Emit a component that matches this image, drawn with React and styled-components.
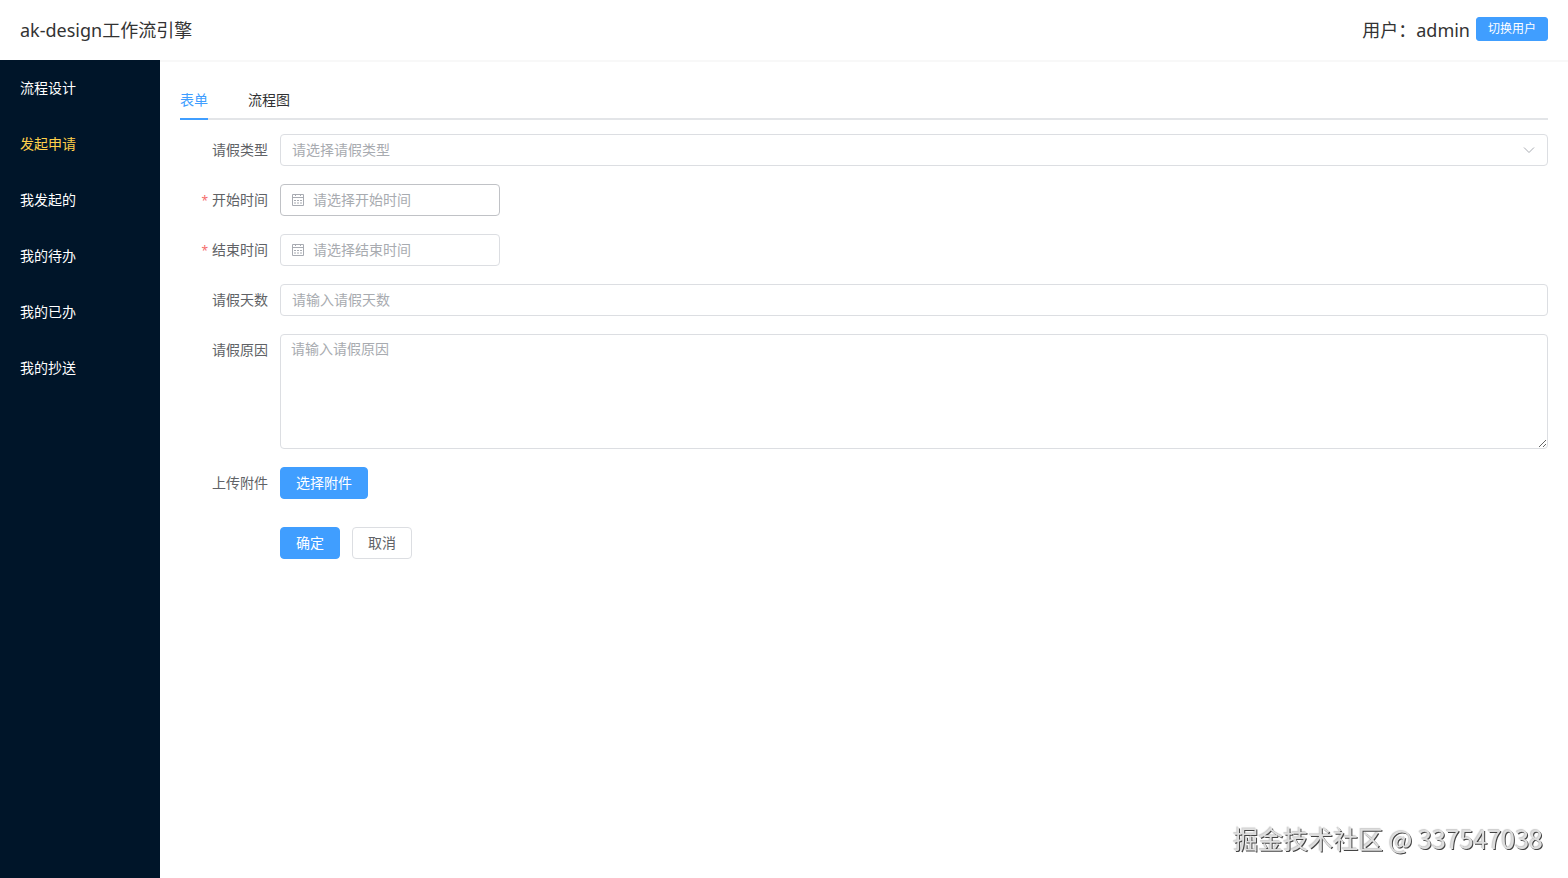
import { useState } from "react";
import styled, { createGlobalStyle } from "styled-components";

const GlobalStyle = createGlobalStyle`
  * {
    box-sizing: border-box;
  }

  body {
    margin: 0;
    background: #fff;
    color: #303133;
    font-family: "Noto Sans", "Noto Sans CJK SC", sans-serif;
    font-size: 14px;
  }

  button, input, select, textarea {
    font-family: inherit;
    font-size: 14px;
  }
`;

const Page = styled.div`
  display: flex;
  flex-direction: column;
  min-height: 100vh;
`;

const Header = styled.header`
  display: flex;
  align-items: center;
  justify-content: space-between;
  height: 60px;
  padding: 0 20px 2px;
  color: #333;
  font-size: 18px;
`;

const Title = styled.h1`
  margin: 0;
  font-size: 18px;
  font-weight: 400;
`;

const User = styled.div`
  display: flex;
  align-items: center;
  gap: 6px;
`;

const Body = styled.div`
  display: flex;
  flex: 1;
`;

const Sidebar = styled.nav`
  width: 160px;
  flex-shrink: 0;
  background: #001529;
`;

const MenuLink = styled.a`
  display: block;
  padding: 0 20px;
  line-height: 56px;
  text-decoration: none;
  color: ${(props) => (props.$active ? "#ffd04b" : "#fff")};
`;

const Main = styled.main`
  flex: 1;
  min-width: 0;
  padding: 18px 20px 20px;
  border-top: 2px solid #f8f8f8;
`;

const Tabs = styled.div`
  display: flex;
  gap: 40px;
  margin-bottom: 14px;
  box-shadow: inset 0 -2px #e3e5e8;
`;

const Tab = styled.button`
  height: 40px;
  padding: 0;
  border: 0;
  border-bottom: 2px solid ${(props) => (props.$active ? "#409eff" : "transparent")};
  background: none;
  color: ${(props) => (props.$active ? "#409eff" : "#303133")};
  cursor: pointer;
`;

const Form = styled.form`
  display: flex;
  flex-direction: column;
  gap: 18px;
`;

const Row = styled.div`
  display: flex;
  align-items: flex-start;
`;

const Label = styled.label`
  width: 100px;
  flex-shrink: 0;
  padding-right: 12px;
  line-height: 32px;
  text-align: right;
  color: #606266;
`;

const Star = styled.span`
  margin-right: 4px;
  color: #f56c6c;
  font-size: 12px;
  line-height: 1;
`;

const Control = styled.div`
  position: relative;
  width: ${(props) => props.$width || "100%"};

  svg {
    position: absolute;
    top: 9px;
    width: 14px;
    height: 14px;
    color: #a8abb2;
    pointer-events: none;
  }
`;

const Input = styled.input`
  display: block;
  width: 100%;
  height: 32px;
  padding: 0 11px 2px ${(props) => (props.$icon ? "32px" : "11px")};
  border: 1px solid ${(props) => (props.$hover ? "#c0c2c6" : "#dcdee2")};
  border-radius: 4px;
  background: #fff;
  color: #606266;
  outline: none;

  &::placeholder {
    color: #a8abb0;
  }
`;

const Select = styled.select`
  display: block;
  width: 100%;
  height: 32px;
  padding: 0 30px 2px 11px;
  border: 1px solid #dcdee2;
  border-radius: 4px;
  background: #fff;
  color: ${(props) => (props.value ? "#606266" : "#a8abb0")};
  appearance: none;
  outline: none;
`;

const Textarea = styled.textarea`
  display: block;
  width: 100%;
  height: 115px;
  padding: 3px 10px;
  border: 1px solid #dcdee2;
  border-radius: 4px;
  color: #606266;
  line-height: 21px;
  resize: vertical;
  outline: none;

  &::placeholder {
    color: #a8abb0;
  }
`;

const Button = styled.button`
  height: ${(props) => (props.$small ? "24px" : "32px")};
  padding: 0 ${(props) => (props.$small ? "11px" : "15px")} 2px;
  border: 1px solid ${(props) => (props.$primary ? "#409eff" : "#dcdee2")};
  border-radius: ${(props) => (props.$small ? "3px" : "4px")};
  background: ${(props) => (props.$primary ? "#409eff" : "#fff")};
  color: ${(props) => (props.$primary ? "#fff" : "#606266")};
  font-size: ${(props) => (props.$small ? "12px" : "14px")};
  cursor: pointer;
`;

const Actions = styled.div`
  display: flex;
  gap: 12px;
  padding: 10px 0 0 100px;
`;

const Watermark = styled.div`
  position: fixed;
  right: 25px;
  bottom: 22px;
  color: #dedede;
  font-family: "Noto Sans CJK SC", sans-serif;
  font-size: 25px;
  line-height: 36px;
  text-shadow: 1px 1px 0 #444, -1px -1px 1px #ccc;
  pointer-events: none;
`;

const ArrowIcon = styled.svg`
  right: 12px;
`;

const DateIcon = styled.svg`
  left: 11px;
`;

const menus = ["流程设计", "发起申请", "我发起的", "我的待办", "我的已办", "我的抄送"];

function Calendar() {
  return (
    <DateIcon viewBox="0 0 14 14" fill="none" stroke="currentColor" aria-hidden="true">
      <path d="M1.500 1.500h11v11h-11zM1.500 4.500h11M4.500 1v2M9.500 1v2" />
      <path d="M3 7.500h2M6 7.500h2M9 7.500h2M3 10h2M6 10h2M9 10h2" />
    </DateIcon>
  );
}

function DateRow({ id, label, hover }) {
  return (
    <Row>
      <Label htmlFor={id}>
        <Star>*</Star>
        {label}
      </Label>
      <Control $width="220px">
        <Input id={id} $icon $hover={hover} placeholder={`请选择${label}`} />
        <Calendar />
      </Control>
    </Row>
  );
}

function App() {
  const [menu, setMenu] = useState("发起申请");
  const [tab, setTab] = useState("表单");
  const [type, setType] = useState("");

  return (
    <Page>
      <GlobalStyle />
      <Header>
        <Title>ak-design工作流引擎</Title>
        <User>
          <span>用户：admin</span>
          <Button type="button" $primary $small>切换用户</Button>
        </User>
      </Header>
      <Body>
        <Sidebar>
          {menus.map((item) => (
            <MenuLink key={item} href="#" $active={item === menu} onClick={() => setMenu(item)}>
              {item}
            </MenuLink>
          ))}
        </Sidebar>
        <Main>
          <Tabs role="tablist">
            {["表单", "流程图"].map((item) => (
              <Tab
                key={item}
                type="button"
                role="tab"
                aria-selected={item === tab}
                $active={item === tab}
                onClick={() => setTab(item)}
              >
                {item}
              </Tab>
            ))}
          </Tabs>
          <Form onSubmit={(e) => e.preventDefault()}>
            <Row>
              <Label htmlFor="type">请假类型</Label>
              <Control>
                <Select id="type" value={type} onChange={(e) => setType(e.target.value)}>
                  <option value="">请选择请假类型</option>
                </Select>
                <ArrowIcon viewBox="0 0 14 14" fill="none" stroke="currentColor" aria-hidden="true">
                  <path d="M2 4.500l5 5 5-5" />
                </ArrowIcon>
              </Control>
            </Row>
            <DateRow id="start" label="开始时间" hover />
            <DateRow id="end" label="结束时间" />
            <Row>
              <Label htmlFor="days">请假天数</Label>
              <Control>
                <Input id="days" placeholder="请输入请假天数" />
              </Control>
            </Row>
            <Row>
              <Label htmlFor="reason">请假原因</Label>
              <Control>
                <Textarea id="reason" placeholder="请输入请假原因" />
              </Control>
            </Row>
            <Row>
              <Label htmlFor="file">上传附件</Label>
              <Button id="file" type="button" $primary>选择附件</Button>
            </Row>
            <Actions>
              <Button type="submit" $primary>确定</Button>
              <Button type="reset">取消</Button>
            </Actions>
          </Form>
        </Main>
      </Body>
      <Watermark>掘金技术社区 @ 337547038</Watermark>
    </Page>
  );
}

export default App;
